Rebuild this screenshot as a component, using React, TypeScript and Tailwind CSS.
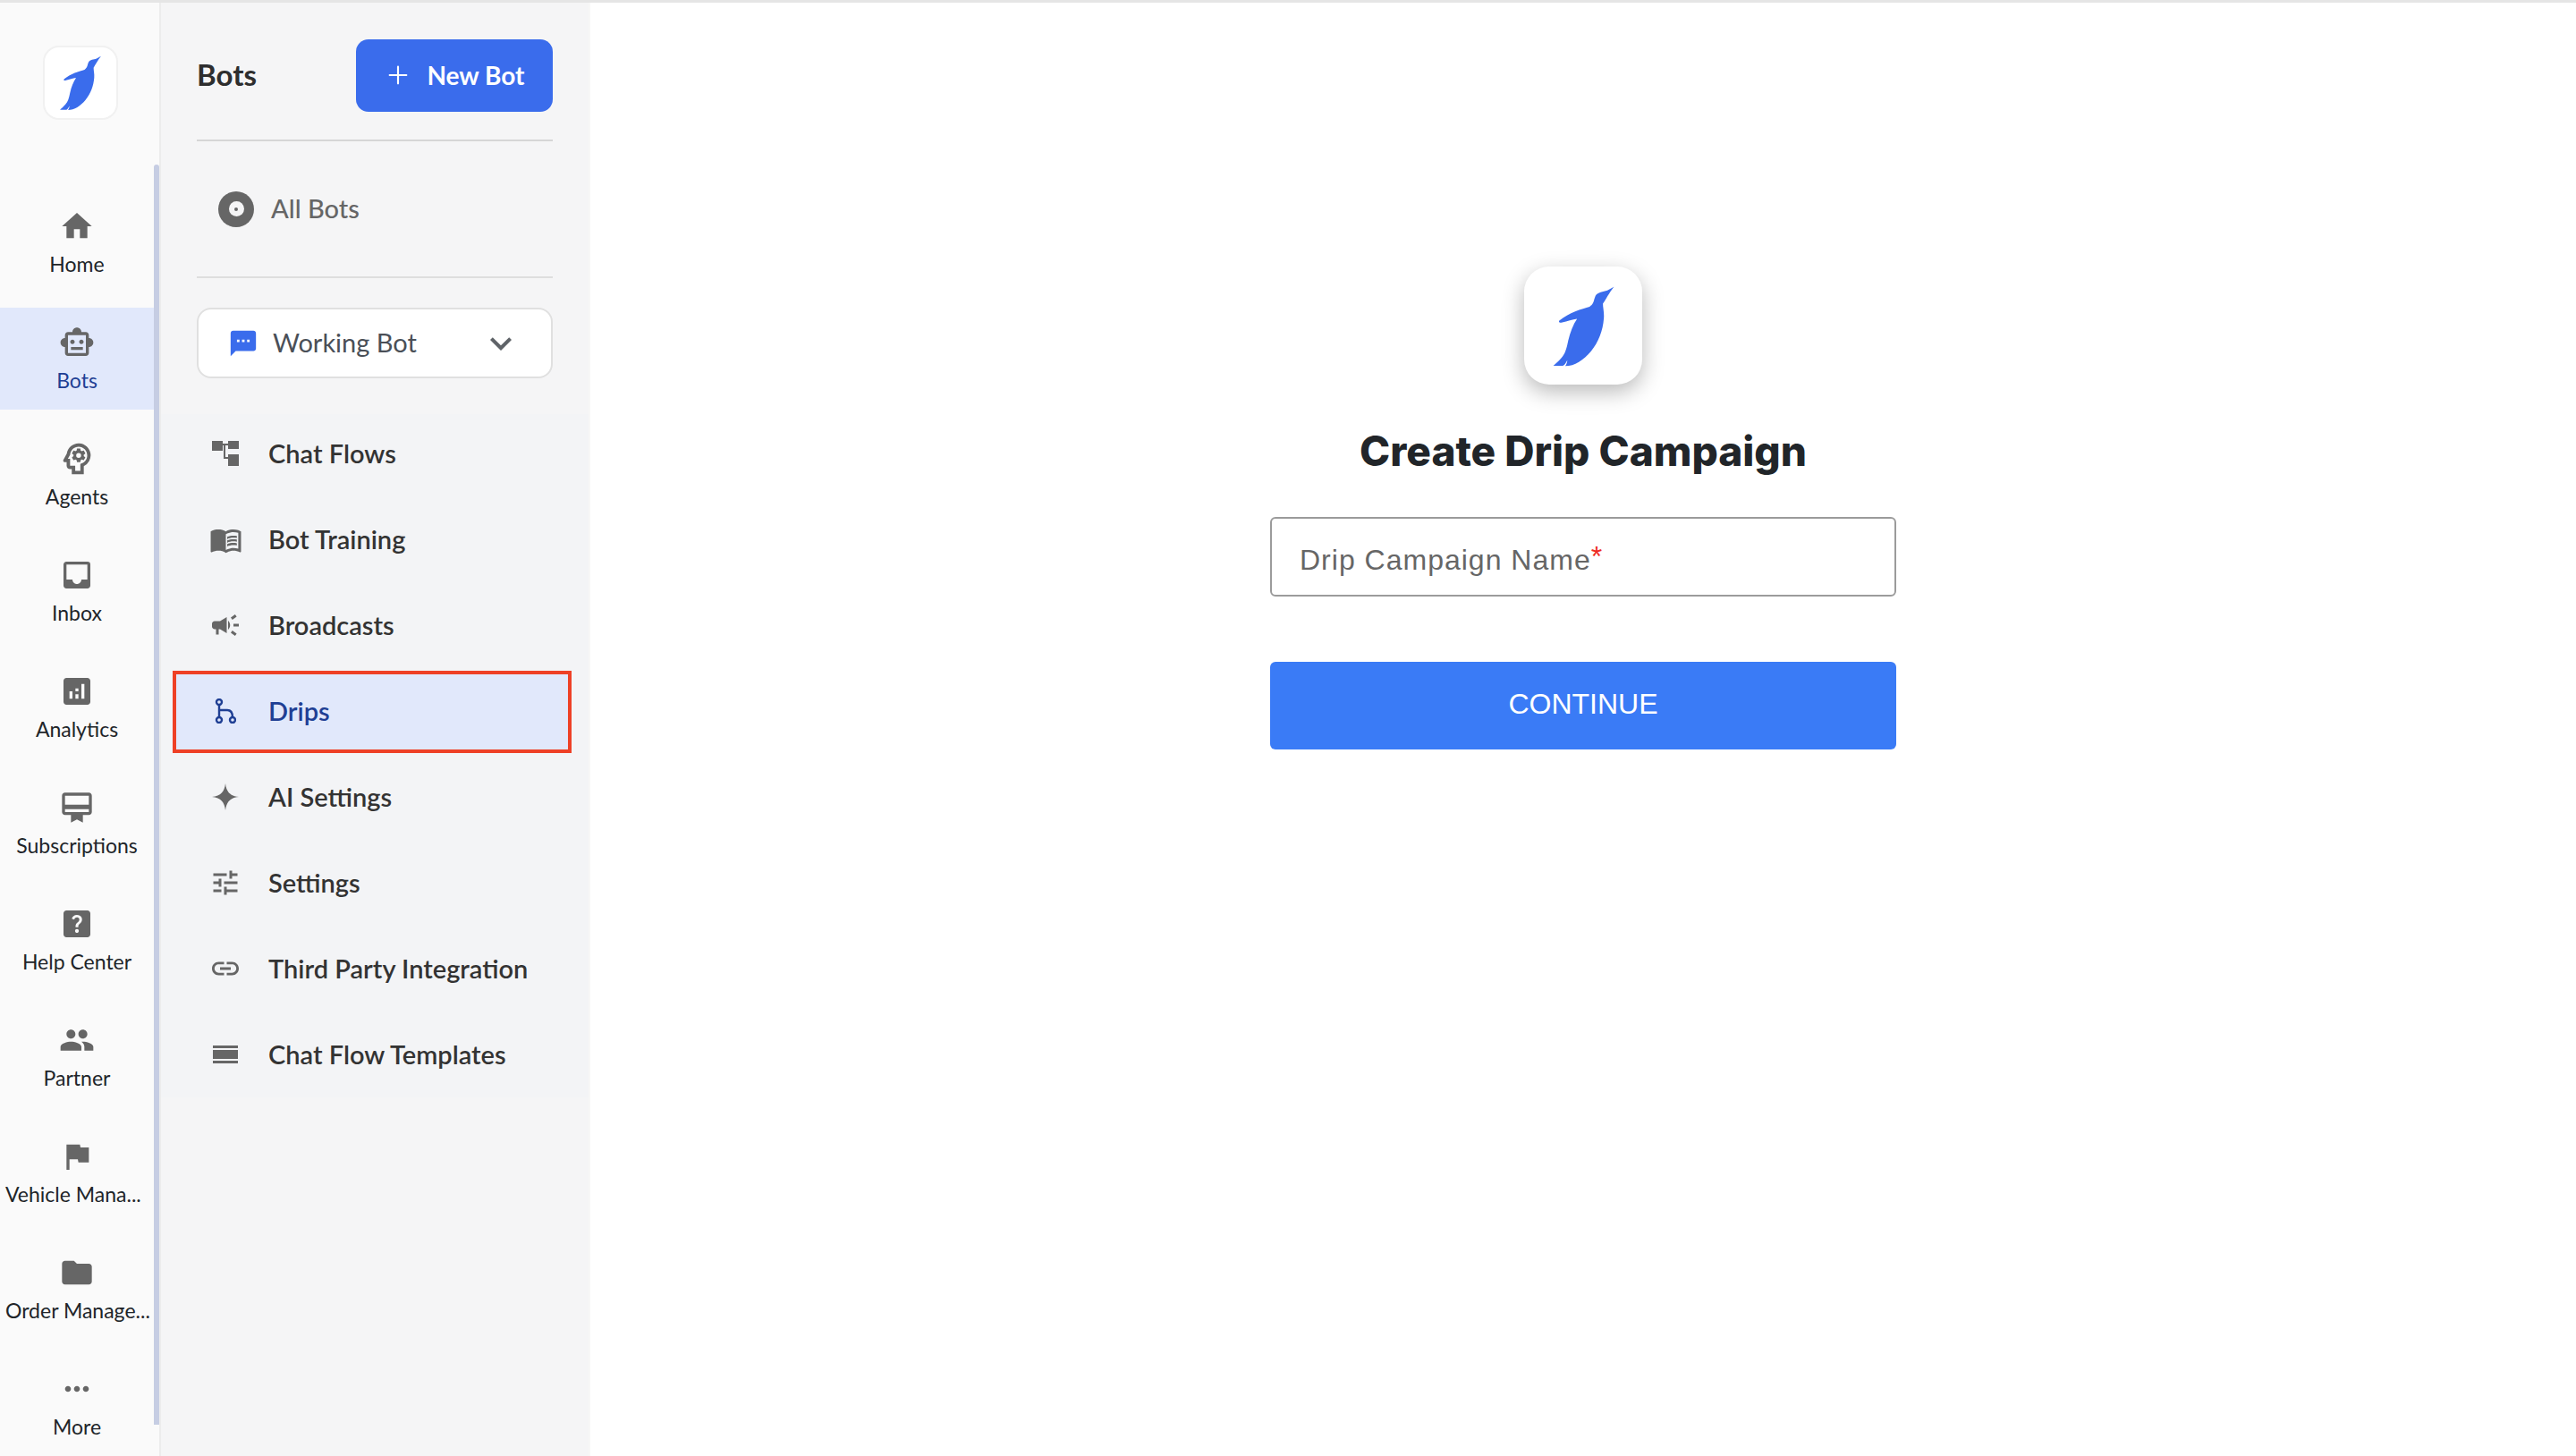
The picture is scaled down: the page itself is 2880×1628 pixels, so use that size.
import { Plus } from "lucide-react";
import {
  MdAnalytics,
  MdCampaign,
  MdCardMembership,
  MdExpandMore,
  MdFlag,
  MdFolder,
  MdHelpCenter,
  MdHome,
  MdInbox,
  MdLink,
  MdMenuBook,
  MdMoreHoriz,
  MdOutlinePsychology,
  MdOutlineSmartToy,
  MdPeople,
  MdSms,
  MdTune,
} from "react-icons/md";

const Penguin = ({ className }: { className: string }) => (
  <svg viewBox="160 110 220 280" className={className} fill="#3a6cec">
    <path d="M372 118 L350 130 C335 135 318 135 310 148 C303 165 305 175 290 185 C265 192 220 205 188 232 C185 238 190 240 198 238 C215 235 232 228 248 226 C235 245 225 270 218 300 C213 325 208 345 195 358 C185 370 175 378 168 384 L200 384 C205 382 210 375 215 365 C215 372 212 380 208 385 C240 385 270 365 295 335 C320 305 335 265 338 225 C340 205 335 190 335 175 C345 160 355 140 372 118 Z" />
  </svg>
);

const ChatFlowsIcon = ({ className }: { className?: string }) => (
  <svg viewBox="0 0 30 28" className={className} fill="currentColor">
    <rect x="0" y="0" width="12" height="11" />
    <rect x="18" y="0" width="12" height="9" />
    <rect x="18" y="15" width="12" height="13" />
    <path d="M12 3h6v2h-3v13h3v2h-5V5h-1z" />
  </svg>
);

const DripsIcon = ({ className }: { className?: string }) => (
  <svg viewBox="0 0 24 28" className={className} fill="none" stroke="currentColor" strokeWidth="2.4">
    <circle cx="5" cy="4" r="3" />
    <circle cx="5" cy="24" r="3" />
    <circle cx="20" cy="24" r="3" />
    <path d="M5 7v14M5 13h9c4 0 6 3 6 8" />
  </svg>
);

const SparkleIcon = ({ className }: { className?: string }) => (
  <svg viewBox="0 0 30 30" className={className} fill="currentColor">
    <path d="M15 0 C16 9 20 14 30 15 C20 16 16 21 15 30 C14 21 10 16 0 15 C10 14 14 9 15 0 Z" />
  </svg>
);

const TemplatesIcon = ({ className }: { className?: string }) => (
  <svg viewBox="0 0 28 20" className={className} fill="currentColor">
    <rect x="0" y="0" width="28" height="3" />
    <rect x="0" y="5" width="28" height="10" />
    <rect x="0" y="17" width="28" height="3" />
  </svg>
);

const RAIL_ITEMS = [
  { label: "Home", icon: MdHome },
  { label: "Bots", icon: MdOutlineSmartToy, active: true },
  { label: "Agents", icon: MdOutlinePsychology, big: true },
  { label: "Inbox", icon: MdInbox },
  { label: "Analytics", icon: MdAnalytics },
  { label: "Subscriptions", icon: MdCardMembership },
  { label: "Help Center", icon: MdHelpCenter },
  { label: "Partner", icon: MdPeople },
  { label: "Vehicle Mana...", icon: MdFlag, cut: true },
  { label: "Order Manage...", icon: MdFolder, cut: true },
  { label: "More", icon: MdMoreHoriz },
];

const NAV_ITEMS = [
  { label: "Chat Flows", icon: ChatFlowsIcon, size: "h-7 w-[30px]" },
  { label: "Bot Training", icon: MdMenuBook, size: "h-[37px] w-[37px]" },
  { label: "Broadcasts", icon: MdCampaign, size: "h-9 w-9" },
  { label: "Drips", icon: DripsIcon, size: "h-7 w-6", active: true },
  { label: "AI Settings", icon: SparkleIcon, size: "h-[30px] w-[30px]" },
  { label: "Settings", icon: MdTune, size: "h-9 w-9" },
  { label: "Third Party Integration", icon: MdLink, size: "h-9 w-9" },
  { label: "Chat Flow Templates", icon: TemplatesIcon, size: "h-5 w-7" },
];

const Rail = () => (
  <aside className="relative flex w-[180px] shrink-0 flex-col border-r-2 border-[#ececec] bg-[#fafafa]">
    <div className="mt-[48px] ml-[48px] flex h-[85px] w-[84px] items-center justify-center rounded-[18px] border-2 border-[#f1f1f1] bg-white">
      <Penguin className="h-[63px] w-[50px]" />
    </div>
    <div className="mt-[80px] flex w-[172px] flex-col gap-4">
      {RAIL_ITEMS.map((item) => (
        <div
          key={item.label}
          className={`flex h-[114px] flex-col items-center pt-[19px] ${item.active ? "bg-[#e1e8fb]" : ""}`}
        >
          <item.icon className={`shrink-0 text-[#666666] ${item.big ? "-my-[3px] h-[46px] w-[46px]" : "h-10 w-10"}`} />
          <span
            className={`mt-2 w-full text-[23px] leading-7 whitespace-nowrap ${item.cut ? "pl-[6px]" : "text-center"} ${item.active ? "text-[#1f3f94]" : "text-[#212529]"}`}
          >
            {item.label}
          </span>
        </div>
      ))}
    </div>
    {/* scrollbar thumb */}
    <div className="absolute top-[181px] right-0 bottom-[35px] w-[6px] rounded-t-md bg-[#c6cde3]" />
  </aside>
);

const BotsPanel = () => (
  <section className="flex w-[480px] shrink-0 flex-col border-r-2 border-[#f7f7f7] bg-[#f5f5f6]">
    <div className="px-10 pt-[41px]">
      <div className="flex h-[81px] items-center justify-between">
        <span className="pb-[2px] text-[33px] font-bold text-[#2e2e2e]">Bots</span>
        <button className="flex h-[81px] w-[220px] items-center justify-center gap-[16px] rounded-[14px] bg-[#3a6cec] pb-[2px] text-[28px] font-bold text-white">
          <Plus className="h-8 w-8" strokeWidth={1.6} />
          New Bot
        </button>
      </div>
      <div className="mt-[31px] h-[2px] bg-[#d6d6d6]" />
      <div className="flex h-[151px] items-center gap-[19px] pl-6">
        <div className="flex h-10 w-10 items-center justify-center rounded-full bg-[#666666]">
          <div className="flex h-[17px] w-[17px] items-center justify-center rounded-full bg-[#f5f5f6]">
            <div className="h-1 w-1 rounded-full bg-[#666666]" />
          </div>
        </div>
        <span className="pb-[2px] text-[29px] font-medium text-[#666666]">All Bots</span>
      </div>
      <div className="h-[2px] bg-[#dedede]" />
      <div className="mt-[33px] flex h-[79px] items-center rounded-2xl border-2 border-[#e0e0e0] bg-white pr-[32px] pl-[33px]">
        <MdSms className="h-[34px] w-[34px] text-[#3a6cec]" />
        <span className="ml-[16px] flex-1 pb-[2px] text-[29px] text-[#4a4f57]">Working Bot</span>
        <MdExpandMore className="h-12 w-12 text-[#5f6368]" />
      </div>
    </div>
    <nav className="mt-[40px] flex h-[764px] flex-col gap-2 bg-[#f3f4f6]">
      {NAV_ITEMS.map((item) => (
        <div
          key={item.label}
          className={`relative mx-[13px] flex h-[88px] shrink-0 items-center ${item.active ? "text-[#1f3f94]" : "text-[#333333]"}`}
        >
          {item.active && (
            <div className="absolute top-[-1px] right-[6px] bottom-[-3px] left-0 bg-[#e1e8fb]" />
          )}
          <div className="relative ml-[39px] flex h-10 w-10 shrink-0 items-center justify-center">
            <item.icon className={`${item.size} ${item.active ? "text-[#1f3f94]" : "text-[#666666]"}`} />
          </div>
          <span className="relative ml-[28px] text-[29px] font-semibold whitespace-nowrap">{item.label}</span>
          {/* red annotation around the selected row */}
          {item.active && (
            <div className="absolute top-[-1px] right-[6px] bottom-[-3px] left-0 border-4 border-[#ee4026]" />
          )}
        </div>
      ))}
    </nav>
  </section>
);

const CreateForm = () => (
  <main className="flex flex-1 flex-col items-center bg-white pt-[295px]">
    <div className="flex h-[132px] w-[132px] items-center justify-center rounded-[28px] bg-white shadow-[0_8px_24px_rgba(0,0,0,0.28)]">
      <Penguin className="h-[93px] w-[73px]" />
    </div>
    <h1 className="mt-[41px] font-['Inter',sans-serif] text-[46px] leading-[66px] font-extrabold whitespace-nowrap text-[#212529]">
      Create Drip Campaign
    </h1>
    <div className="mt-[41px] flex h-[89px] w-[700px] items-center rounded-md border-2 border-[#9b9b9b] bg-white pt-[6px] pl-[31px] font-['Liberation_Sans',sans-serif] text-[32px] tracking-[1px] text-[#666666]">
      Drip Campaign Name<span className="-mt-2 text-[#ee2b24]">*</span>
    </div>
    <button className="mt-[73px] h-[98px] w-[700px] rounded-md bg-[#3a7bf6] pb-[4px] font-['Liberation_Sans',sans-serif] text-[32px] text-white">
      CONTINUE
    </button>
  </main>
);

export default function App() {
  return (
    <div className="flex h-[1628px] w-[2880px] flex-col overflow-hidden bg-white font-['Lato',sans-serif]">
      <div className="h-[3px] shrink-0 bg-[#e5e5e5]" />
      <div className="flex min-h-0 flex-1">
        <Rail />
        <BotsPanel />
        <CreateForm />
      </div>
    </div>
  );
}
